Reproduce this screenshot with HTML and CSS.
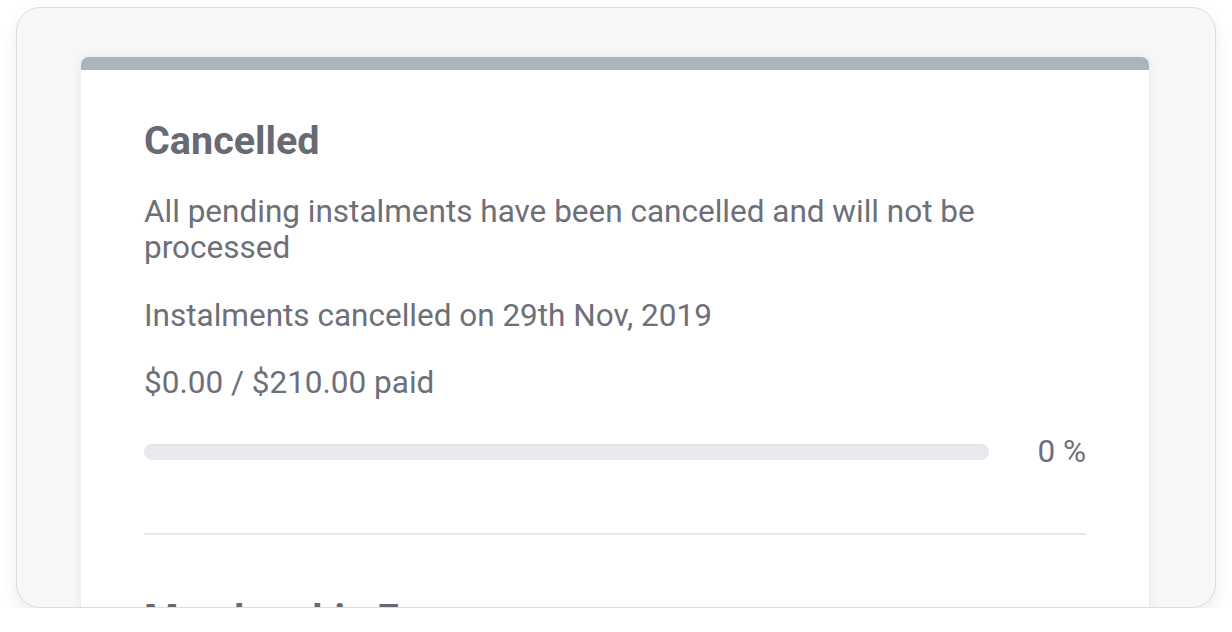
FILE: index.html
```html
<!DOCTYPE html>
<html lang="en">
<head>
	<meta charset="UTF-8">
	<title>Instalments</title>
	<link rel="stylesheet" href="styles.css">
</head>
<body>
<div class="frame">
	<div class="card">
		<div class="status">
			<h2 class="title">Cancelled</h2>
			<p class="desc">All pending instalments have been cancelled and will not be processed</p>
			<p class="line">Instalments cancelled on 29th Nov, 2019</p>
			<p class="line">$0.00 / $210.00 paid</p>
			<div class="progress">
				<div class="bar"><div class="fill" style="width: 0%"></div></div>
				<span class="pct">0 %</span>
			</div>
		</div>
		<div class="section">
			<h2 class="title">Membership Fee</h2>
		</div>
	</div>
</div>
</body>
</html>
```

FILE: styles.css
```css
*{margin: 0;padding: 0;box-sizing: border-box;}
html,body{background: #fff;}
body{padding: 7px 16px 0;font-family: Roboto, "Liberation Sans", sans-serif;color: #6d6f79;}
.frame{width: 1200px;height: 601px;background: #f7f7f8;border: 1px solid #dcdcdf;border-radius: 24px;overflow: hidden;padding: 49px 66px 0 64px;box-shadow: 0 8px 16px rgba(0,0,0,0.08);}
.card{background: #fff;border-top: 13px solid #adb3bb;border-radius: 8px 8px 0 0;box-shadow: 0 0 10px rgba(0,0,0,0.07);padding: 47px 63px 40px;height: 700px;}
.title{font-size: 39.5px;font-weight: 700;line-height: 48px;color: #676973;}
.desc{font-size: 31.5px;line-height: 36px;margin-top: 29px;}
.line{font-size: 31.5px;line-height: 34px;margin-top: 33px;}
.progress{display: flex;align-items: center;margin-top: 35px;}
.bar{flex: 1;height: 16px;border-radius: 8px;background: #e9eaed;box-shadow: inset 0 1px 1px rgba(0,0,0,0.04);overflow: hidden;}
.fill{height: 100%;background: #adb3bb;}
.pct{font-size: 31.5px;line-height: 34px;margin-left: 48px;}
.status{padding-bottom: 64px;border-bottom: 2px solid #e7e9ed;}
.section{padding-top: 60px;}
```
